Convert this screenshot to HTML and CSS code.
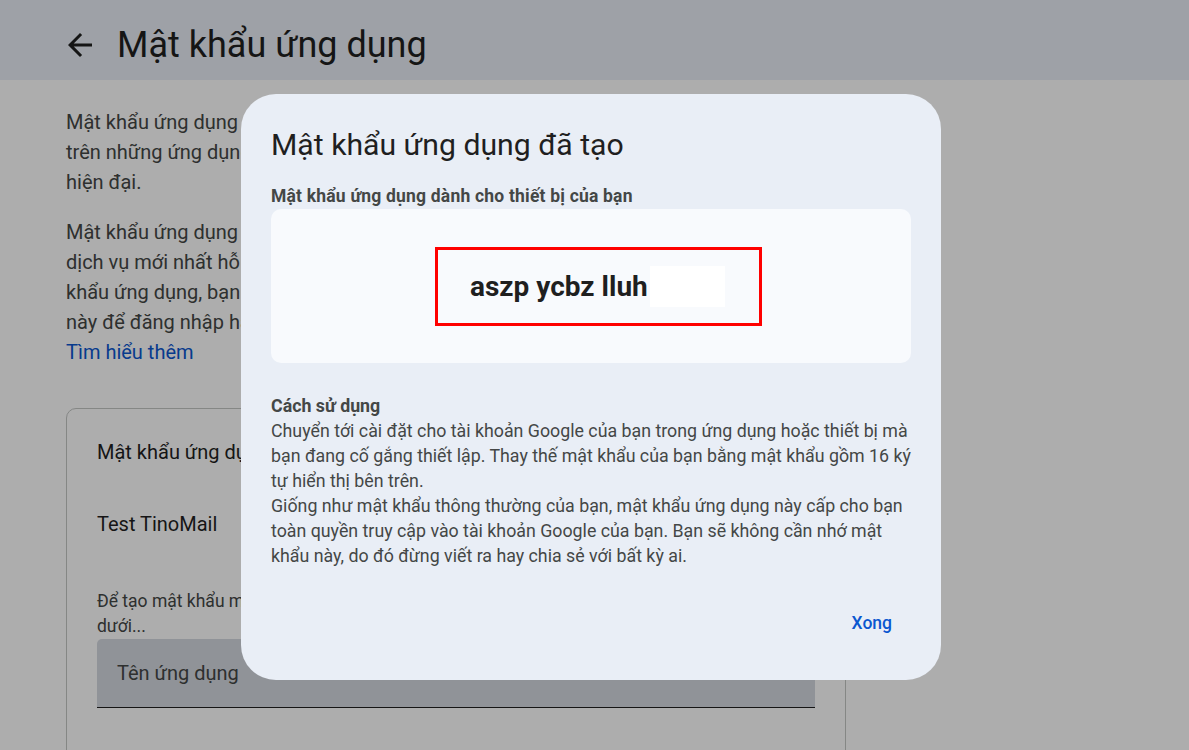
FILE: index.html
```html
<!DOCTYPE html>
<html lang="vi">
<head>
    <meta charset="UTF-8">
    <meta name="viewport" content="width=device-width, initial-scale=1.0">
    <title>Mật khẩu ứng dụng</title>
    <link rel="stylesheet" href="styles.css">
</head>
<body>
    <header class="top-bar">
        <svg class="back-icon" viewBox="0 0 24 24" width="36" height="36">
            <path d="M20 11H7.83l5.59-5.59L12 4l-8 8 8 8 1.41-1.41L7.83 13H20v-2z" fill="#1f1f1f"/>
        </svg>
        <h1>Mật khẩu ứng dụng</h1>
    </header>

    <main class="page">
        <p class="intro">Mật khẩu ứng dụng giúp bạn đăng nhập vào Tài khoản Google của bạn<br>trên những ứng dụng và dịch vụ cũ hơn không hỗ trợ tiêu chuẩn bảo mật<br>hiện đại.</p>
        <p class="intro">Mật khẩu ứng dụng kém an toàn hơn so với việc sử dụng ứng dụng và<br>dịch vụ mới nhất hỗ trợ tiêu chuẩn bảo mật hiện đại. Trước khi tạo mật<br>khẩu ứng dụng, bạn nên kiểm tra xem ứng dụng có cần mật khẩu<br>này để đăng nhập hay không.<br><a href="#" class="link">Tìm hiểu thêm</a></p>

        <section class="card">
            <h2>Mật khẩu ứng dụng của bạn</h2>
            <div class="app-item">Test TinoMail</div>
            <p class="hint">Để tạo mật khẩu mới dành riêng cho ứng dụng, hãy nhập tên ứng dụng ở bên<br>dưới...</p>
            <div class="field">Tên ứng dụng</div>
        </section>
    </main>

    <div class="overlay">
        <div class="dialog">
            <h3>Mật khẩu ứng dụng đã tạo</h3>
            <div class="label">Mật khẩu ứng dụng dành cho thiết bị của bạn</div>
            <div class="password-box">
                <div class="highlight">
                    <span class="password">aszp ycbz lluh</span>
                    <span class="mask"></span>
                </div>
            </div>
            <div class="usage">
                <div class="usage-title">Cách sử dụng</div>
                <p>Chuyển tới cài đặt cho tài khoản Google của bạn trong ứng dụng hoặc thiết bị mà<br>bạn đang cố gắng thiết lập. Thay thế mật khẩu của bạn bằng mật khẩu gồm 16 ký<br>tự hiển thị bên trên.</p>
                <p>Giống như mật khẩu thông thường của bạn, mật khẩu ứng dụng này cấp cho bạn<br>toàn quyền truy cập vào tài khoản Google của bạn. Bạn sẽ không cần nhớ mật<br>khẩu này, do đó đừng viết ra hay chia sẻ với bất kỳ ai.</p>
            </div>
            <div class="actions">
                <button type="button">Xong</button>
            </div>
        </div>
    </div>
</body>
</html>
```

FILE: styles.css
```css
/* General Styles */
html, body {
    overflow: hidden;
}

body {
    margin: 0;
    font-family: Roboto, Arial, sans-serif;
    color: #1f1f1f;
    background-color: #fff;
}

.top-bar {
    height: 80px;
    box-sizing: border-box;
    padding: 10px 0 0 62px;
    display: flex;
    align-items: center;
    gap: 19px;
    background-color: #e9eef6;
}

.top-bar h1 {
    margin: 0;
    font-size: 36px;
    font-weight: 400;
    color: #1f1f1f;
}

.page {
    width: 780px;
    padding: 27px 0 0 66px;
}

.intro {
    margin: 0 0 20px;
    font-size: 20px;
    line-height: 30px;
    color: #444746;
    white-space: nowrap;
}

.link {
    color: #0b57d0;
    text-decoration: none;
}

.card {
    margin-top: 41px;
    height: 400px;
    padding: 28px 30px 0;
    border: 1px solid #c4c7c5;
    border-radius: 10px;
}

.card h2 {
    margin: 0;
    font-size: 20px;
    font-weight: 400;
    line-height: 30px;
}

.app-item {
    margin-top: 42px;
    font-size: 20px;
    line-height: 30px;
}

.hint {
    margin: 50px 0 0;
    font-size: 17.5px;
    line-height: 25px;
    color: #444746;
}

.field {
    height: 69px;
    box-sizing: border-box;
    padding: 22px 20px 0;
    background-color: #d5d9e1;
    border-bottom: 1px solid #1f1f1f;
    border-radius: 5px 5px 0 0;
    font-size: 20px;
    color: #444746;
}

/* Dialog */
.overlay {
    position: fixed;
    inset: 0;
    background-color: rgba(0, 0, 0, 0.32);
    display: flex;
    justify-content: center;
    align-items: flex-start;
    padding: 94px 7px 0 0;
}

.dialog {
    width: 700px;
    box-sizing: border-box;
    padding: 30px 30px 32px;
    background-color: #e9eef6;
    border-radius: 35px;
}

.dialog h3 {
    margin: 0;
    font-size: 30.2px;
    font-weight: 400;
    line-height: 42px;
    color: #1f1f1f;
}

.label {
    margin-top: 20px;
    font-size: 17.5px;
    font-weight: 700;
    letter-spacing: 0.2px;
    line-height: 20px;
    color: #444746;
}

.password-box {
    margin-top: 3px;
    height: 154px;
    display: flex;
    justify-content: center;
    align-items: center;
    padding-left: 15px;
    background-color: #f8fafd;
    border-radius: 10px;
}

.highlight {
    width: 327px;
    height: 79px;
    box-sizing: border-box;
    padding: 0 0 0 32px;
    display: flex;
    align-items: center;
    gap: 2px;
    border: 3px solid #ff0000;
}

.password {
    font-size: 28px;
    font-weight: 700;
    color: #1f1f1f;
}

.mask {
    width: 75px;
    height: 41px;
    background-color: #fff;
}

.usage {
    margin-top: 30px;
    font-size: 17.8px;
    line-height: 25px;
    color: #444746;
}

.usage-title {
    font-weight: 700;
}

.usage p {
    margin: 0;
    white-space: nowrap;
}

.actions {
    margin-top: 30px;
    display: flex;
    justify-content: flex-end;
}

button {
    height: 50px;
    padding: 0 19px;
    border: none;
    background: none;
    font-family: Roboto, Arial, sans-serif;
    font-size: 17.5px;
    font-weight: 500;
    color: #0b57d0;
    cursor: pointer;
}
```
